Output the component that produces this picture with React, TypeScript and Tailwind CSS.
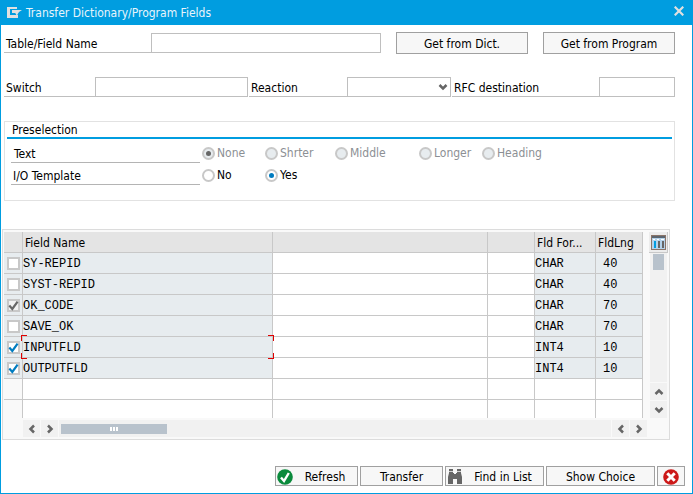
import { useState } from "react";
import type { ReactNode } from "react";

type Dir = "left" | "right" | "up" | "down";

const arrowPaths: Record<Dir, string> = {
  left: "M7 1.5 3.5 5 7 8.5",
  right: "M3 1.5 6.5 5 3 8.5",
  up: "M1.5 7 5 3.5 8.5 7",
  down: "M1.5 3 5 6.5 8.5 3",
};

function Arrow({ dir }: { dir: Dir }) {
  return (
    <svg viewBox="0 0 10 10" className="size-[10px]" fill="none" stroke="#666" strokeWidth="2.5">
      <path d={arrowPaths[dir]} />
    </svg>
  );
}

function ScrollButton({ dir, label }: { dir: Dir; label: string }) {
  return (
    <button aria-label={label} className="grid size-[17px] shrink-0 place-content-center bg-[#f1f1f1]">
      <Arrow dir={dir} />
    </button>
  );
}

function Label({ htmlFor, className, children }: { htmlFor: string; className: string; children: ReactNode }) {
  return (
    <label htmlFor={htmlFor} className={`h-5 shrink-0 border-b border-[#bfbfbf] pl-[2px] leading-[22px] ${className}`}>
      {children}
    </label>
  );
}

const fieldClass = "h-5 min-w-0 rounded-none border border-[#bfbfbf] bg-white px-1 outline-none";
const buttonClass = "flex items-center justify-center border border-[#a0a0a0] bg-[#f7f7f7] pt-[2px]";

function Radio({
  name,
  label,
  checked,
  disabled,
  onSelect,
  className,
}: {
  name: string;
  label: string;
  checked: boolean;
  disabled?: boolean;
  onSelect?: () => void;
  className: string;
}) {
  return (
    <label
      className={`flex h-[22px] shrink-0 items-center gap-[2px] pt-[2px] ${disabled ? "text-[#8c8f94]" : ""} ${className}`}
    >
      <input
        type="radio"
        name={name}
        checked={checked}
        disabled={disabled}
        onChange={() => onSelect?.()}
        className="grid size-[13px] appearance-none place-content-center rounded-full border-2 border-[#c8c8c8] bg-white before:size-[5px] before:rounded-full checked:before:bg-[#007cc0] disabled:bg-[#e7ecef] disabled:checked:before:bg-[#666]"
      />
      {label}
    </label>
  );
}

type Field = { name: string; format: string; length: string; checked: boolean; disabled?: boolean };

const initialFields: Field[] = [
  { name: "SY-REPID", format: "CHAR", length: "40", checked: false },
  { name: "SYST-REPID", format: "CHAR", length: "40", checked: false },
  { name: "OK_CODE", format: "CHAR", length: "70", checked: true, disabled: true },
  { name: "SAVE_OK", format: "CHAR", length: "70", checked: false },
  { name: "INPUTFLD", format: "INT4", length: "10", checked: true },
  { name: "OUTPUTFLD", format: "INT4", length: "10", checked: true },
];

function RowCheck({ field, onToggle }: { field: Field; onToggle: () => void }) {
  return (
    <span className="ml-[3px] grid size-[13px]">
      <input
        type="checkbox"
        aria-label={`Select ${field.name}`}
        checked={field.checked}
        disabled={field.disabled}
        onChange={onToggle}
        className="col-start-1 row-start-1 size-[13px] appearance-none border-2 border-[#c8c8c8] bg-white disabled:bg-[#f1f1f1]"
      />
      {field.checked && (
        <svg
          viewBox="0 0 13 13"
          className="pointer-events-none col-start-1 row-start-1 size-[13px]"
          fill="none"
          stroke={field.disabled ? "#666" : "#007cc0"}
          strokeWidth="2.2"
        >
          <path d="M2.3 6.6 5.3 10 10.6 2.6" />
        </svg>
      )}
    </span>
  );
}

function FocusCorners() {
  return (
    <span className="pointer-events-none absolute -inset-[2px] z-10">
      <span className="absolute left-0 top-0 size-[6px] border-l border-t border-[#e00000]" />
      <span className="absolute right-0 top-0 size-[6px] border-r border-t border-[#e00000]" />
      <span className="absolute bottom-0 left-0 size-[6px] border-b border-l border-[#e00000]" />
      <span className="absolute bottom-0 right-0 size-[6px] border-b border-r border-[#e00000]" />
    </span>
  );
}

const cell = "border-b border-r border-[#c8c8c8]";
const lastCell = "border-r border-[#c8c8c8] p-0";

function FieldTable() {
  const [fields, setFields] = useState(initialFields);
  const toggle = (i: number) => setFields(fields.map((f, n) => (n === i ? { ...f, checked: !f.checked } : f)));

  return (
    <table className="w-full table-fixed border-separate border-spacing-0">
      <colgroup>
        <col className="w-[19px]" />
        <col className="w-[250px]" />
        <col />
        <col className="w-[47px]" />
        <col className="w-[61px]" />
        <col className="w-[47px]" />
      </colgroup>
      <thead>
        <tr className="h-[21px] bg-[#e4e4e4] text-left">
          <th className={`${cell} p-0`} />
          <th className={`${cell} pb-0 pl-[2px] pr-0 pt-[2px] font-normal`}>Field Name</th>
          <th className={`${cell} p-0`} />
          <th className={`${cell} p-0`} />
          <th className={`${cell} pb-0 pl-[2px] pr-0 pt-[2px] font-normal`}>Fld For...</th>
          <th className={`${cell} pb-0 pl-[2px] pr-0 pt-[2px] font-normal`}>FldLng</th>
        </tr>
      </thead>
      <tbody className="font-['Liberation_Mono',monospace] leading-4">
        {fields.map((f, i) => (
          <tr key={f.name} className="h-[21px] bg-white">
            <td className={`${cell} bg-[#e7ecef] p-0`}>
              <RowCheck field={f} onToggle={() => toggle(i)} />
            </td>
            <td className={`${cell} relative bg-[#e7ecef] px-0 pb-0 pt-[2px] ${f.name === "INPUTFLD" ? "z-10" : ""}`}>
              {f.name}
              {f.name === "INPUTFLD" && <FocusCorners />}
            </td>
            <td className={`${cell} p-0`} />
            <td className={`${cell} p-0`} />
            <td className={`${cell} bg-[#e7ecef] px-0 pb-0 pt-[2px]`}>{f.format}</td>
            <td className={`${cell} bg-[#e7ecef] pb-0 pl-[7px] pr-0 pt-[2px]`}>{f.length}</td>
          </tr>
        ))}
        <tr className="h-[21px] bg-white">
          <td className={`${cell} bg-[#f9f9f9] p-0`} />
          <td className={`${cell} p-0`} />
          <td className={`${cell} p-0`} />
          <td className={`${cell} p-0`} />
          <td className={`${cell} p-0`} />
          <td className={`${cell} p-0`} />
        </tr>
        <tr className="h-[18px] bg-white">
          <td className={`${lastCell} bg-[#f9f9f9]`} />
          <td className={lastCell} />
          <td className={lastCell} />
          <td className={lastCell} />
          <td className={lastCell} />
          <td className={lastCell} />
        </tr>
      </tbody>
    </table>
  );
}

export default function App() {
  const [template, setTemplate] = useState("Yes");

  return (
    <main className="border border-t-0 border-[#009de0] bg-white font-['DejaVu_Sans_Condensed','Noto_Sans',sans-serif] text-[12px] leading-4 text-black">
      <header className="flex h-[25px] items-center bg-[#009de0] pl-[6px] pr-2 text-[#e8f4fb]">
        <svg viewBox="0 0 15 11" className="h-[11px] w-[15px]" fill="#e0e0e0">
          <path d="M0 0h10v2H3v6h6V7l2 1v3H0z" />
          <path d="M5 3h10l-3 2-2 3-2-2H5z" />
        </svg>
        <h1 className="ml-1 flex-1">Transfer Dictionary/Program Fields</h1>
        <button aria-label="Close" className="-mt-[3px]">
          <svg viewBox="0 0 10 10" className="size-[10px]" fill="none" stroke="#e0e0e0" strokeWidth="2.2">
            <path d="M.7.7 9.3 9.3M9.3.7.7 9.3" />
          </svg>
        </button>
      </header>

      <form className="pl-[3px] pr-[17px] pt-[7px]" onSubmit={(e) => e.preventDefault()}>
        <div className="flex items-center">
          <Label htmlFor="field-name" className="w-[147px]">
            Table/Field Name
          </Label>
          <input id="field-name" className={`${fieldClass} flex-1`} />
          <button className={`${buttonClass} ml-[15px] h-[22px] w-[132px]`}>Get from Dict.</button>
          <button className={`${buttonClass} ml-[15px] h-[22px] w-[132px]`}>Get from Program</button>
        </div>

        <div className="mt-[23px] flex">
          <Label htmlFor="switch" className="w-[91px]">
            Switch
          </Label>
          <input id="switch" className={`${fieldClass} flex-1`} />
          <Label htmlFor="reaction" className="ml-px w-[98px]">
            Reaction
          </Label>
          <div className="grid w-[104px] items-center">
            <select id="reaction" className={`${fieldClass} col-start-1 row-start-1 w-full appearance-none`}>
              <option value="" />
            </select>
            <span className="pointer-events-none col-start-1 row-start-1 mr-[3px] justify-self-end">
              <Arrow dir="down" />
            </span>
          </div>
          <Label htmlFor="rfc" className="ml-px w-[147px]">
            RFC destination
          </Label>
          <input id="rfc" className={`${fieldClass} w-[76px]`} />
        </div>

        <section className="mt-6 border border-[#e2e2e2] px-[2px] pb-[15px]">
          <h2 className="h-[17px] border-b-2 border-[#009de0] pl-[5px]">Preselection</h2>
          <div className="mt-[2px] flex h-[22px] pl-1">
            <span className="h-full w-[189px] border-b border-[#b4b4b4] pl-[3px] leading-[26px]">Text</span>
            <Radio name="text" label="None" checked disabled className="ml-[2px] w-[63px]" />
            <Radio name="text" label="Shrter" checked={false} disabled className="w-[70px]" />
            <Radio name="text" label="Middle" checked={false} disabled className="w-[84px]" />
            <Radio name="text" label="Longer" checked={false} disabled className="w-[63px]" />
            <Radio name="text" label="Heading" checked={false} disabled className="w-[84px]" />
          </div>
          <div className="flex h-[22px] pl-1">
            <span className="h-full w-[189px] border-b border-[#b4b4b4] pl-[2px] leading-[26px]">I/O Template</span>
            <Radio
              name="template"
              label="No"
              checked={template === "No"}
              onSelect={() => setTemplate("No")}
              className="ml-[2px] w-[63px]"
            />
            <Radio
              name="template"
              label="Yes"
              checked={template === "Yes"}
              onSelect={() => setTemplate("Yes")}
              className="w-[70px]"
            />
          </div>
        </section>
      </form>

      <section className="ml-px mr-[22px] mt-7 border border-[#dcdcdc] bg-[#f9f9f9] pb-[2px] pl-px pr-px pt-[2px]">
        <div className="flex">
          <div className="min-w-0 flex-1">
            <FieldTable />
          </div>
          <div className="ml-[6px] flex w-[19px] flex-col items-center">
            <button
              aria-label="Table settings"
              className="grid h-[21px] w-[19px] shrink-0 place-content-center border-b border-r border-[#c8c8c8] bg-[#ececec]"
            >
              <svg viewBox="0 0 15 15" className="size-[15px]">
                <path d="M0 0h15v15H0z" fill="#8a7468" />
                <path d="M1 1h13v13H1z" fill="#b4d2ea" />
                <path d="M1 1h13v2H1z" fill="#5c6670" />
                <path d="M2 4h2v1H2zM6 4h2v1H6zM10 4h3v1h-3z" fill="#fff" />
                <path d="M3 6h2v7H3z" fill="#009de0" />
                <path d="M7 6h2v7H7zM11 6h2v7h-2z" fill="#666" />
              </svg>
            </button>
            <div className="mb-px flex w-[17px] flex-1 justify-center bg-[#f1f1f1] pt-px">
              <div className="h-4 w-[11px] bg-[#b8c2cc]" />
            </div>
            <ScrollButton dir="up" label="Scroll up" />
            <div className="h-px" />
            <ScrollButton dir="down" label="Scroll down" />
          </div>
        </div>
        <div className="ml-[19px] mr-[21px] mt-[2px] flex gap-px">
          <ScrollButton dir="left" label="Scroll to start" />
          <ScrollButton dir="right" label="Scroll right" />
          <div className="flex flex-1 items-center bg-[#f1f1f1] pl-[2px]">
            <div className="flex h-[10px] w-[106px] items-center justify-center gap-px bg-[#b8c2cc]">
              <span className="h-1 w-[2px] bg-white" />
              <span className="h-1 w-[2px] bg-white" />
              <span className="h-1 w-[2px] bg-white" />
            </div>
          </div>
          <ScrollButton dir="left" label="Scroll left" />
          <ScrollButton dir="right" label="Scroll to end" />
        </div>
      </section>

      <footer className="mb-[7px] mr-[7px] mt-[26px] flex justify-end gap-[2px]">
        <button className={`${buttonClass} h-5 w-[83px]`}>
          <svg viewBox="0 0 16 16" className="ml-px size-4 shrink-0">
            <circle cx="8" cy="8" r="7.8" fill="#0a8a3c" />
            <path d="M4 8.5 7 12 11.8 4" fill="none" stroke="#fff" strokeWidth="2.4" />
          </svg>
          <span className="flex-1 text-center">Refresh</span>
        </button>
        <button className={`${buttonClass} h-5 w-[83px]`}>Transfer</button>
        <button className={`${buttonClass} h-5 w-[99px]`}>
          <svg viewBox="0 0 16 16" className="ml-px size-4 shrink-0" fill="#666">
            <path d="M2 0h4v4h1v1h2V4h1V0h4v4l1 4v7h-5v-5H6v5H1V8l1-4z" />
            <path d="M2 2.500h4M10 2.500h4" stroke="#d0d0d0" strokeWidth="1" />
          </svg>
          <span className="flex-1 text-center">Find in List</span>
        </button>
        <button className={`${buttonClass} h-5 w-[109px]`}>Show Choice</button>
        <button aria-label="Cancel" className={`${buttonClass} h-5 w-[28px]`}>
          <svg viewBox="0 0 16 16" className="size-4">
            <circle cx="8" cy="8" r="7.8" fill="#cc1919" />
            <path d="M4.3 4.3 11.7 11.7M11.7 4.3 4.3 11.7" stroke="#fff" strokeWidth="3" />
          </svg>
        </button>
      </footer>
    </main>
  );
}
